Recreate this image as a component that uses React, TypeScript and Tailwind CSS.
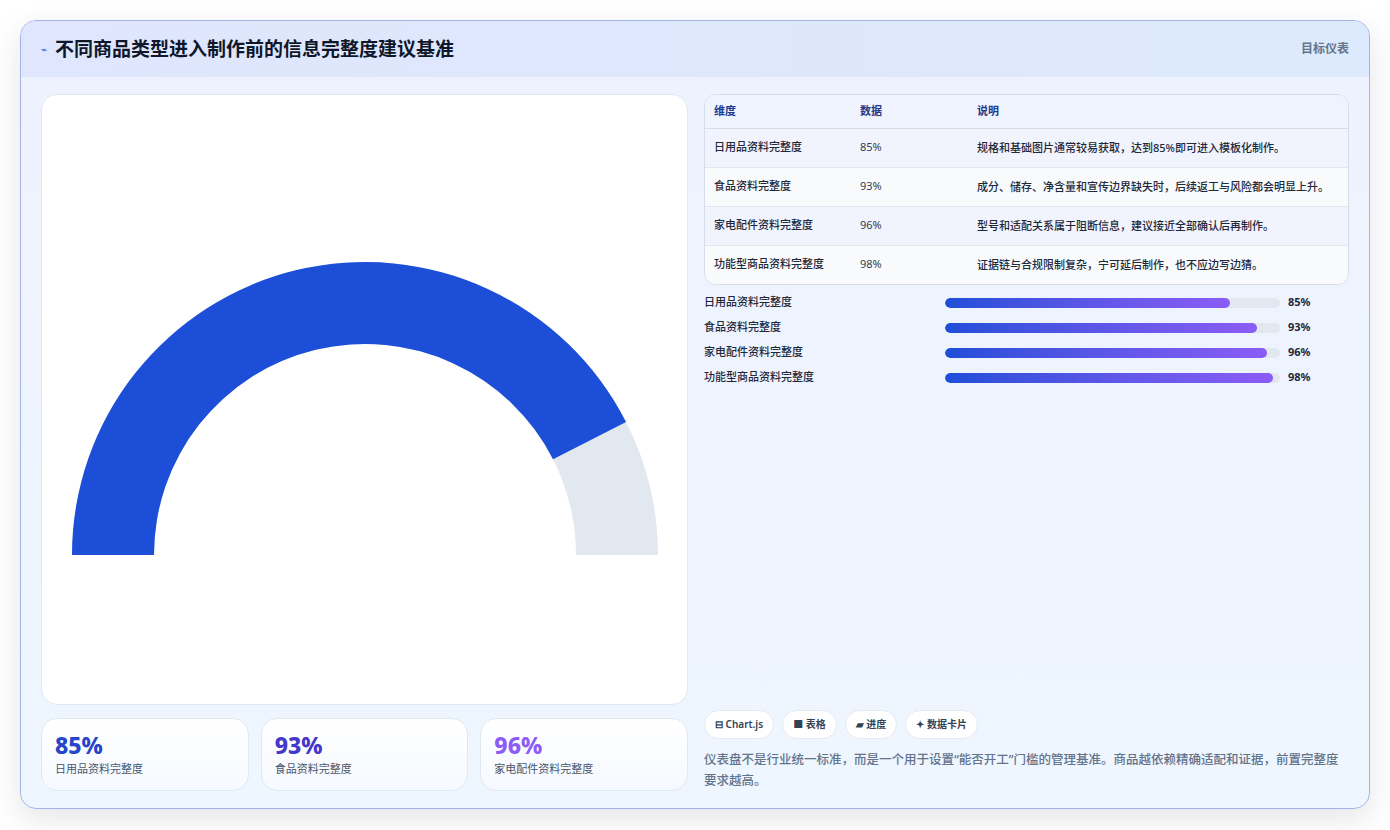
const rows = [
  { k: "日用品资料完整度", v: 85, d: "规格和基础图片通常较易获取，达到85%即可进入模板化制作。" },
  { k: "食品资料完整度", v: 93, d: "成分、储存、净含量和宣传边界缺失时，后续返工与风险都会明显上升。" },
  { k: "家电配件资料完整度", v: 96, d: "型号和适配关系属于阻断信息，建议接近全部确认后再制作。" },
  { k: "功能型商品资料完整度", v: 98, d: "证据链与合规限制复杂，宁可延后制作，也不应边写边猜。" },
];

function Gauge() {
  const cx = 323, cy = 460, R = 293, r = 211;
  const a = Math.PI * (1 - 0.85);
  const pt = (rad: number, ang: number) => [cx + rad * Math.cos(ang), cy - rad * Math.sin(ang)];
  const [x1, y1] = pt(R, a);
  const [x2, y2] = pt(r, a);
  return (
    <svg width="647" height="611" viewBox="0 0 647 611" className="block">
      <path d={`M${cx - R} ${cy} A${R} ${R} 0 0 1 ${cx + R} ${cy} L${cx + r} ${cy} A${r} ${r} 0 0 0 ${cx - r} ${cy} Z`} fill="#e2e8f0" />
      <path d={`M${cx - R} ${cy} A${R} ${R} 0 0 1 ${x1} ${y1} L${x2} ${y2} A${r} ${r} 0 0 0 ${cx - r} ${cy} Z`} fill="#1d4ed8" />
    </svg>
  );
}

export default function App() {
  return (
    <div className="w-[1390px] h-[830px] bg-white p-5" style={{ fontFamily: '"Noto Sans", "Noto Sans CJK SC", sans-serif' }}>
      <div className="h-[789px] rounded-2xl border border-[#a5b4e8] overflow-hidden bg-gradient-to-b from-[#eef2fe] to-[#eef6ff] shadow-[0_10px_30px_rgba(30,41,59,0.12)] flex flex-col">
        <div className="h-[56px] shrink-0 flex items-center justify-between px-5 bg-gradient-to-r from-[#dfe6fd] to-[#dde9fc]">
          <div className="flex items-center gap-2">
            <span className="text-[10px] text-[#3b5bdb]">⌁</span>
            <h1 className="text-[19px] font-bold text-[#0f172a]">不同商品类型进入制作前的信息完整度建议基准</h1>
          </div>
          <span className="text-[12px] font-semibold text-[#64748b]">目标仪表</span>
        </div>
        <div className="flex-1 flex gap-4 px-5 pt-[17px] pb-[17px]">
          <div className="w-[647px] flex flex-col gap-[13px]">
            <div className="h-[611px] rounded-2xl bg-white border border-[#e2e8f0] overflow-hidden">
              <Gauge />
            </div>
            <div className="flex gap-3">
              {rows.slice(0, 3).map((r, i) => (
                <div key={r.k} className="flex-1 h-[73px] rounded-2xl border border-[#e2e8f0] bg-gradient-to-b from-white to-[#f6f9ff] px-[13px] pt-[12px]">
                  <div className={`text-[23px] leading-[28px] font-extrabold ${i === 0 ? "text-[#2546c8]" : i === 1 ? "text-[#4338ca]" : "text-[#8b5cf6]"}`}>{r.v}%</div>
                  <div className="text-[11px] text-[#475569] mt-[2px]">{r.k}</div>
                </div>
              ))}
            </div>
          </div>
          <div className="w-[647px] flex flex-col justify-between">
            <div>
              <div className="rounded-xl border border-[#d5dcea] overflow-hidden bg-white">
                <table className="w-full text-[11px] text-left">
                  <thead>
                    <tr className="h-[33px] bg-[#eef3fe] text-[#1e3a8a] border-b border-[#d5dcea]">
                      <th className="pl-[9px] w-[155px] font-bold">维度</th>
                      <th className="w-[117px] font-bold">数据</th>
                      <th className="font-bold">说明</th>
                    </tr>
                  </thead>
                  <tbody>
                    {rows.map((r, i) => (
                      <tr key={r.k} className={`${i % 2 === 0 ? "bg-[#f1f4fd]" : "bg-[#f8fafc]"} border-b border-[#e2e8f0] last:border-b-0 align-top text-[#1e293b]`}>
                        <td className="pl-[9px] py-[10px] font-medium">{r.k}</td>
                        <td className="py-[10px] text-[#334155]">{r.v}%</td>
                        <td className="py-[10px] pr-4 leading-[18px] font-medium">{r.d}</td>
                      </tr>
                    ))}
                  </tbody>
                </table>
              </div>
              <div className="mt-[9px] flex flex-col gap-[7px]">
                {rows.map(r => (
                  <div key={r.k} className="flex items-center h-[18px] text-[11px]">
                    <span className="w-[241px] text-[#1e293b] font-medium">{r.k}</span>
                    <div className="w-[335px] h-[10px] rounded-full bg-[#e2e8f0] overflow-hidden">
                      <div className="h-full rounded-full bg-gradient-to-r from-[#1d4ed8] to-[#8b5cf6]" style={{ width: `${r.v}%` }} />
                    </div>
                    <span className="ml-2 font-bold text-[#1e293b]">{r.v}%</span>
                  </div>
                ))}
              </div>
            </div>
            <div>
              <div className="flex gap-2">
                {["⊟ Chart.js", "■ 表格", "▰ 进度", "✦ 数据卡片"].map(t => (
                  <span key={t} className="h-[29px] px-[10px] flex items-center rounded-full bg-white border border-[#e5e9f2] text-[10px] font-semibold text-[#334155]">{t}</span>
                ))}
              </div>
              <p className="mt-[10px] text-[12.5px] leading-[21px] text-[#64748b] font-medium">仪表盘不是行业统一标准，而是一个用于设置“能否开工”门槛的管理基准。商品越依赖精确适配和证据，前置完整度要求越高。</p>
            </div>
          </div>
        </div>
      </div>
    </div>
  );
}
